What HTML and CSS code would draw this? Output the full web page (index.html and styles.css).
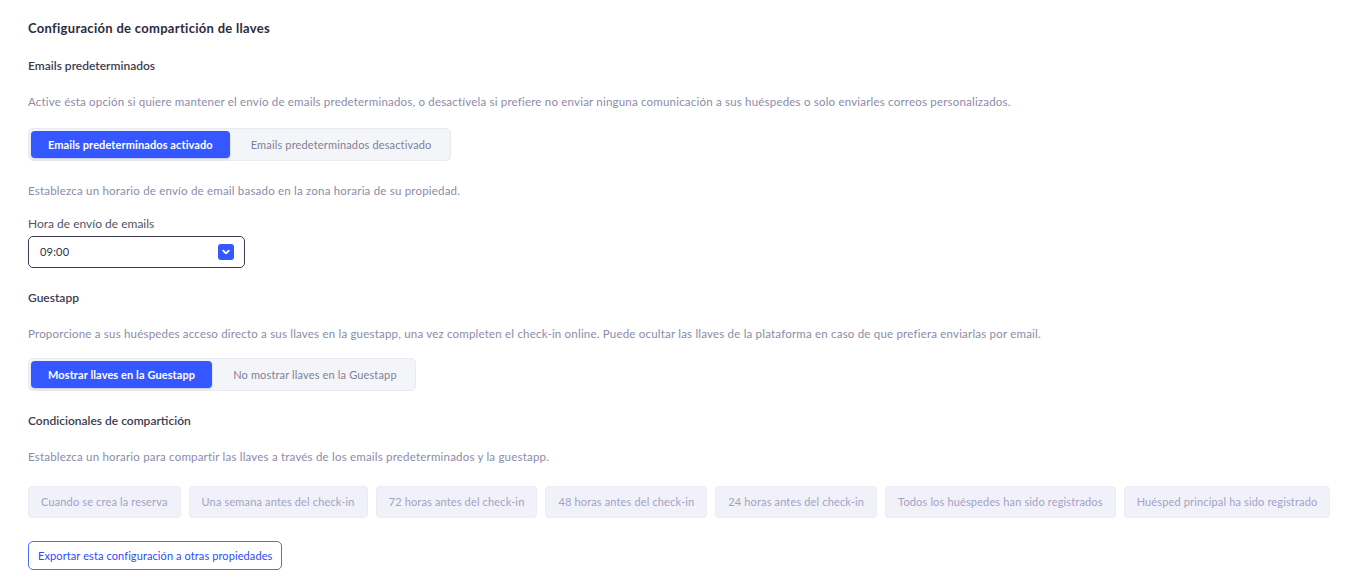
FILE: index.html
```html
<!DOCTYPE html>
<html lang="es">
  <head>
    <meta charset="UTF-8" />
    <title>Configuración de compartición de llaves</title>
    <link rel="stylesheet" href="styles.css">
  </head>
  <body>
    <h1 class="page-title">Configuración de compartición de llaves</h1>

    <!-- Emails predeterminados -->
    <h2 class="section-title">Emails predeterminados</h2>
    <p class="hint">Active ésta opción si quiere mantener el envío de emails predeterminados, o desactívela si prefiere no enviar ninguna comunicación a sus huéspedes o solo enviarles correos personalizados.</p>
    <div class="toggle">
      <button class="toggle-btn active">Emails predeterminados activado</button>
      <button class="toggle-btn">Emails predeterminados desactivado</button>
    </div>

    <p class="hint hint-time">Establezca un horario de envío de email basado en la zona horaria de su propiedad.</p>
    <label class="field-label">Hora de envío de emails</label>
    <div class="select">
      <span>09:00</span>
      <span class="select-arrow">
        <svg width="10" height="10" viewBox="0 0 10 10"><path d="M2.2 3.6 L5 6.4 L7.8 3.6" fill="none" stroke="#fff" stroke-width="1.8" stroke-linecap="round" stroke-linejoin="round"/></svg>
      </span>
    </div>

    <!-- Guestapp -->
    <h2 class="section-title">Guestapp</h2>
    <p class="hint">Proporcione a sus huéspedes acceso directo a sus llaves en la guestapp, una vez completen el check-in online. Puede ocultar las llaves de la plataforma en caso de que prefiera enviarlas por email.</p>
    <div class="toggle toggle-guest">
      <button class="toggle-btn active">Mostrar llaves en la Guestapp</button>
      <button class="toggle-btn">No mostrar llaves en la Guestapp</button>
    </div>

    <!-- Condicionales -->
    <h2 class="section-title">Condicionales de compartición</h2>
    <p class="hint">Establezca un horario para compartir las llaves a través de los emails predeterminados y la guestapp.</p>
    <div class="chips">
      <span class="chip">Cuando se crea la reserva</span>
      <span class="chip">Una semana antes del check-in</span>
      <span class="chip">72 horas antes del check-in</span>
      <span class="chip">48 horas antes del check-in</span>
      <span class="chip">24 horas antes del check-in</span>
      <span class="chip">Todos los huéspedes han sido registrados</span>
      <span class="chip">Huésped principal ha sido registrado</span>
    </div>

    <button class="export-btn">Exportar esta configuración a otras propiedades</button>
  </body>
</html>
```

FILE: styles.css
```css
body {
  font-family: Lato, "Open Sans", sans-serif;
  background-color: #fff;
  margin: 0;
  padding: 20px 28px;
  font-size: 11px;
  line-height: 16px;
  color: #3b3b4f;
}
.page-title {
  margin: 0 0 22px;
  font-size: 13px;
  font-weight: 700;
  letter-spacing: 0.3px;
  color: #2b2b42;
}
.section-title {
  margin: 0 0 20px;
  font-size: 12px;
  font-weight: 600;
  color: #3b3b4f;
}
.hint {
  margin: 0 0 18px;
  font-size: 11.5px;
  color: #8c8ba9;
  letter-spacing: 0.2px;
}
/* two-state switch */
.toggle {
  display: inline-flex;
  padding: 2px;
  background: #f4f5f8;
  border: 1px solid #e8eaef;
  border-radius: 5px;
  margin-bottom: 22px;
}
.toggle-guest {
  margin-top: -2px;
}
.toggle-btn {
  height: 27px;
  padding: 0 16px 0 21px;
  border: none;
  background: none;
  border-radius: 4px;
  font-family: inherit;
  font-size: 11px;
  letter-spacing: 0.15px;
  color: #807f99;
  cursor: pointer;
}
.toggle-btn.active {
  padding: 0 17px;
  background: #3457ff;
  color: #fff;
  font-weight: 700;
  letter-spacing: 0.1px;
  box-shadow: 0 1px 2px rgba(30, 50, 160, 0.25);
}
.hint-time {
  margin-bottom: 17px;
}
.field-label {
  display: block;
  margin-bottom: 4px;
  font-size: 12px;
  color: #54546a;
}
.select {
  display: flex;
  align-items: center;
  justify-content: space-between;
  box-sizing: border-box;
  width: 217px;
  height: 32px;
  padding: 0 10px 0 11px;
  border: 1px solid #3c3c55;
  border-radius: 5px;
  color: #2e2e44;
  letter-spacing: 0.2px;
  margin-bottom: 22px;
}
.select-arrow {
  display: flex;
  align-items: center;
  justify-content: center;
  width: 16px;
  height: 16px;
  background: #3457ff;
  border-radius: 3px;
}
.chips {
  display: flex;
  gap: 8px;
  margin: 21px 0 23px;
}
.chip {
  display: inline-flex;
  align-items: center;
  flex-shrink: 0;
  white-space: nowrap;
  height: 32px;
  box-sizing: border-box;
  padding: 0 12px;
  background: #f1f1fa;
  border: 1px solid #ebebf6;
  border-radius: 4px;
  font-size: 11px;
  color: #a3a2c4;
  letter-spacing: 0.15px;
}
.export-btn {
  height: 29px;
  padding: 0 9px;
  background: #fff;
  border: 1px solid #4e6bff;
  border-radius: 5px;
  font-family: inherit;
  font-size: 11px;
  letter-spacing: 0.1px;
  color: #2d4bff;
  cursor: pointer;
}
```
